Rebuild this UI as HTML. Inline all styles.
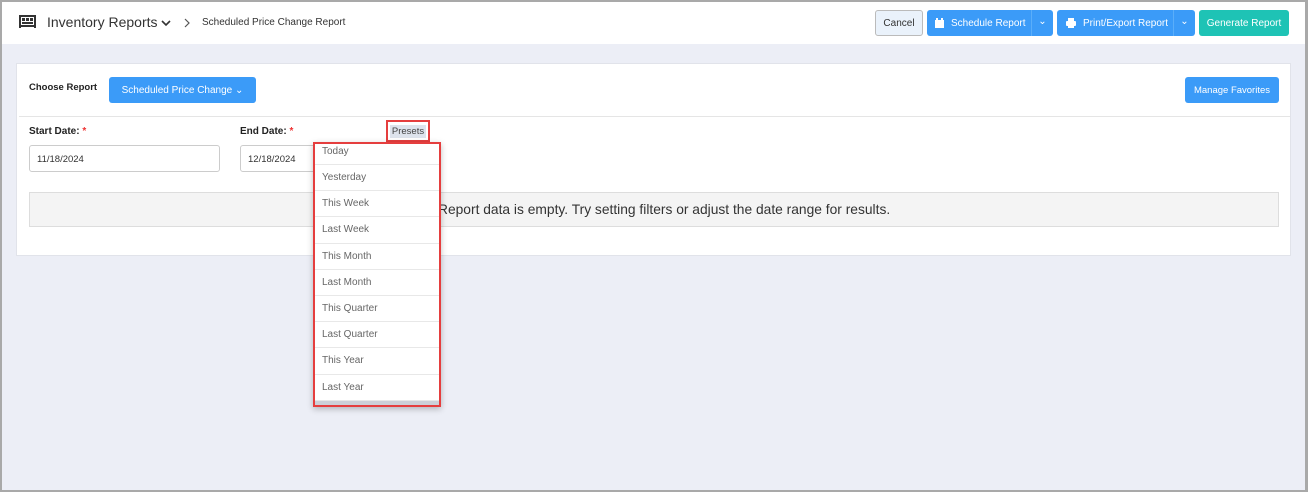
<!DOCTYPE html>
<html><head><style>
*{box-sizing:border-box;margin:0;padding:0}
body{width:1308px;height:492px;overflow:hidden;font-family:"Liberation Sans",Arial,sans-serif;background:#eceef6;position:relative}
.frame{position:absolute;left:0;top:0;width:1308px;height:492px;border:2px solid #a9a9a9;border-right:3px solid #a9a9a9;z-index:10}
.hdr{position:absolute;left:0;top:0;width:1305px;height:44px;background:#fff}
.abs{position:absolute}
.btn{position:absolute;height:26px;border-radius:3px;color:#fff;font-size:10px;display:flex;align-items:center}
.panel{position:absolute;left:16px;top:63px;width:1275px;height:193px;background:#fff;border:1px solid #e1e3ea}
.lbl{position:absolute;font-size:10px;font-weight:bold;color:#222}
.inp{position:absolute;height:27px;border:1px solid #ccc;border-radius:3px;font-size:9.5px;color:#333;padding:8px 7px;background:#fff}
.dd{position:absolute;left:313px;top:142px;width:128px;height:265px;border:2px solid #e53e3e;background:#fff;box-shadow:0 2px 6px rgba(0,0,0,.25);overflow:hidden}
.dd div{height:26.2px;border-bottom:1px solid #e8e8e8;font-size:10px;color:#666;padding:7px 0 0 7px}
</style></head><body>
<div class="frame"></div>
<div class="hdr">
<svg class="abs" style="left:19px;top:15px" width="17" height="13" viewBox="0 0 17 13"><rect x="0" y="0" width="2" height="13" fill="#333"/><rect x="15" y="0" width="2" height="13" fill="#333"/><rect x="0" y="10" width="17" height="2" fill="#333"/><rect x="3" y="3" width="3" height="3" fill="#333"/><rect x="7" y="3" width="3" height="3" fill="#333"/><rect x="11" y="3" width="3" height="3" fill="#333"/><rect x="3" y="7" width="11" height="2" fill="#333"/><rect x="2" y="0" width="13" height="2" fill="#333"/></svg>
<div class="abs" style="left:47px;top:14px;font-size:14px;color:#333">Inventory Reports</div>
<svg class="abs" style="left:161px;top:20px" width="10" height="7"><path d="M1 1l4 4 4-4" stroke="#333" stroke-width="1.6" fill="none"/></svg>
<svg class="abs" style="left:184px;top:18px" width="7" height="10"><path d="M1 1l4 4-4 4" stroke="#555" stroke-width="1.2" fill="none"/></svg>
<div class="abs" style="left:202px;top:17px;font-size:10px;color:#333">Scheduled Price Change Report</div>
<div class="btn" style="left:875px;top:10px;width:48px;background:#eaf2fb;border:1px solid #bbb;color:#333;justify-content:center">Cancel</div>
<div class="btn" style="left:927px;top:10px;width:126px;background:#3b9bf8"><svg style="margin:0 7px 0 8px" width="9" height="10"><rect x="0" y="2" width="9" height="8" fill="#fff"/><rect x="1" y="0" width="2" height="3" fill="#fff"/><rect x="6" y="0" width="2" height="3" fill="#fff"/></svg>Schedule Report<span style="position:absolute;right:0;top:0;width:22px;height:26px;border-left:1px solid #5aaefa;text-align:center;line-height:24px">⌄</span></div>
<div class="btn" style="left:1057px;top:10px;width:138px;background:#3b9bf8"><svg style="margin:0 7px 0 9px" width="10" height="10"><rect x="2" y="0" width="6" height="3" fill="#fff"/><rect x="0" y="3" width="10" height="5" rx="1" fill="#fff"/><rect x="2" y="7" width="6" height="3" fill="#fff"/></svg>Print/Export Report<span style="position:absolute;right:0;top:0;width:22px;height:26px;border-left:1px solid #5aaefa;text-align:center;line-height:24px">⌄</span></div>
<div class="btn" style="left:1199px;top:10px;width:90px;background:#1ec3b5;justify-content:center">Generate Report</div>
</div>
<div class="panel">
<div class="lbl" style="left:12px;top:18px;font-size:9.5px">Choose Report</div>
<div class="btn" style="left:92px;top:13px;width:147px;background:#3b9bf8;justify-content:center">Scheduled Price Change ⌄</div>
<div class="btn" style="left:1168px;top:13px;width:94px;background:#3b9bf8;justify-content:center;font-size:9.5px">Manage Favorites</div>
<div class="abs" style="left:2px;top:52px;width:1271px;height:1px;background:#e5e5e5"></div>
<div class="lbl" style="left:12px;top:62px">Start Date: <span style="color:#e33">*</span></div>
<div class="lbl" style="left:223px;top:62px">End Date: <span style="color:#e33">*</span></div>
<div class="inp" style="left:12px;top:81px;width:191px">11/18/2024</div>
<div class="inp" style="left:223px;top:81px;width:191px">12/18/2024</div>
<div class="abs" style="left:12px;top:128px;width:1250px;height:35px;background:#f4f4f4;border:1px solid #ddd;font-size:13.8px;color:#333;padding:9px 0 0 408px">Report data is empty. Try setting filters or adjust the date range for results.</div>
</div>
<div class="abs" style="left:386px;top:120px;width:44px;height:22px;border:2px solid #e53e3e;background:#fff;padding:3px 2px 2px"><div style="background:#dde3ec;font-size:9.5px;color:#444;text-align:center;height:13px;line-height:13px">Presets</div></div>
<div class="dd">
<div style="height:21px;padding-top:2px">Today</div><div>Yesterday</div><div>This Week</div><div>Last Week</div><div>This Month</div><div>Last Month</div><div>This Quarter</div><div>Last Quarter</div><div>This Year</div><div>Last Year</div>
<div style="height:6px;background:#ccd0d8;border:none;padding:0"></div>
</div>
</body></html>
